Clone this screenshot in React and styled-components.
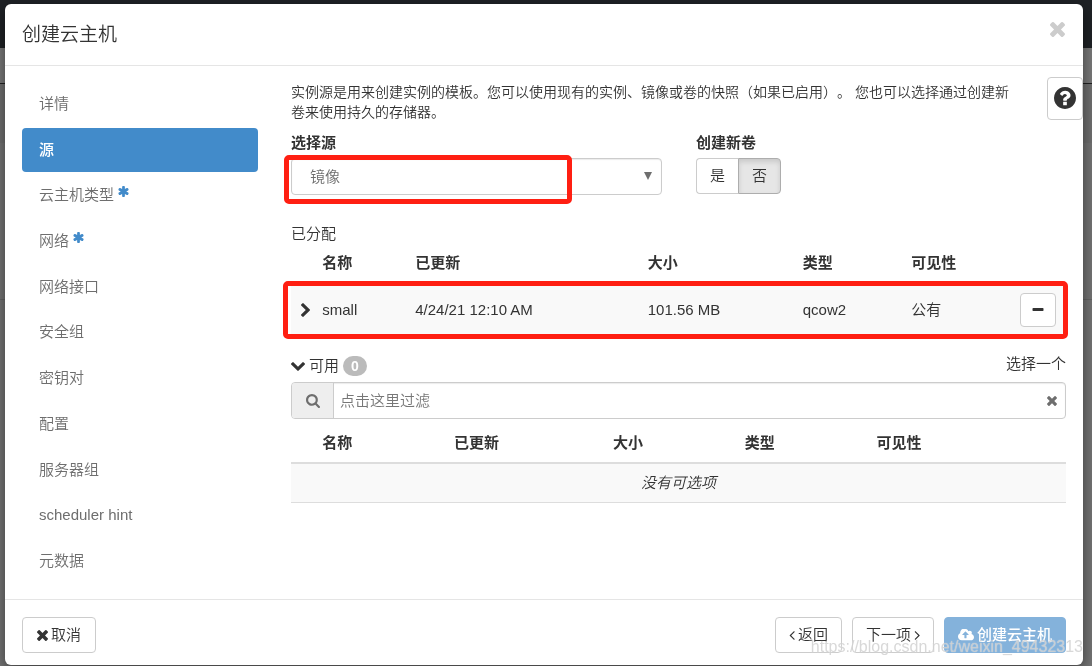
import React from 'react'
import styled, { createGlobalStyle, css } from 'styled-components'

const GlobalStyle = createGlobalStyle`
  * {
    box-sizing: border-box;
  }

  body {
    margin: 0;
    overflow: hidden;
    background: #757575;
    color: #333;
    font-family: "Liberation Sans", "Noto Sans CJK SC", sans-serif;
    font-size: 15px;
    font-weight: 350;
    line-height: 20px;
  }

  button, input, select {
    font: inherit;
    color: inherit;
  }
`

const Backdrop = styled.div`
  min-height: 100vh;
`

const TopBar = styled.div`
  height: 48px;
  background: #1f2226;
`

const Strip = styled.div`
  height: ${props => props.$height}px;
  background: ${props => props.$shade};
  border-bottom: 1px solid ${props => props.$line};
`

const Overlay = styled.div`
  position: fixed;
  inset: 0;
  padding: 4px 9px 0 5px;
`

const Modal = styled.div`
  position: relative;
  background: #fff;
  border-radius: 6px;
  box-shadow: 0 5px 15px rgba(0, 0, 0, 0.5);
`

const Header = styled.header`
  display: flex;
  justify-content: space-between;
  align-items: flex-start;
  height: 62px;
  padding: 18px 18px 0 17px;
  border-bottom: 1px solid #e5e5e5;
`

const Title = styled.h1`
  margin: 0;
  font-size: 19px;
  line-height: 26px;
  font-weight: 350;
`

const IconButton = styled.button`
  display: flex;
  padding: 0;
  border: none;
  background: none;
  color: ${props => props.$color};
`

const Body = styled.div`
  display: grid;
  grid-template-columns: 236px minmax(0, 1fr);
  gap: 33px;
  padding: 16px 17px;
  border-bottom: 1px solid #e5e5e5;
`

const Nav = styled.nav`
  display: grid;
  align-content: space-between;
  min-height: 501px;
`

const NavLink = styled.a`
  display: flex;
  align-items: center;
  gap: 4px;
  height: 44px;
  padding: 0 17px;
  border-radius: 4px;
  color: #6e6e6e;
  text-decoration: none;

  svg {
    color: #428bca;
    margin-bottom: 8px;
  }

  ${props => props.$active && css`
    background: #428bca;
    color: #fff;
    font-weight: 500;
  `}
`

const Content = styled.section`
  min-width: 0;
`

const Intro = styled.p`
  margin: 0 0 11px;
  padding-right: 52px;
  font-size: 14px;
  text-spacing-trim: space-all;
`

const Fields = styled.div`
  display: grid;
  grid-template-columns: 371px 1fr;
  gap: 34px;
`

const Label = styled.label`
  display: block;
  margin-bottom: 5px;
  font-weight: 700;
`

const SelectWrap = styled.div`
  position: relative;
`

const Select = styled.select`
  display: block;
  width: 100%;
  height: 37px;
  padding: 0 18px;
  border: 1px solid #ccc;
  border-radius: 4px;
  background: #fff;
  color: #6e6e6e;
  appearance: none;
  box-shadow: inset 0 1px 1px rgba(0, 0, 0, 0.08);
`

const Caret = styled.span`
  position: absolute;
  top: 14px;
  right: 10px;
  border: 4px solid transparent;
  border-top: 8px solid #6e6e6e;
  border-bottom: none;
  pointer-events: none;
`

const Marker = styled.div`
  position: absolute;
  inset: ${props => props.$inset};
  border: 5px solid #ff1f12;
  border-radius: 5px;
  pointer-events: none;
`

const Toggle = styled.div`
  display: flex;
`

const Button = styled.button`
  display: inline-flex;
  align-items: center;
  justify-content: center;
  gap: 3px;
  height: 36px;
  padding: 0 13px;
  border: 1px solid #ccc;
  border-radius: 4px;
  background: #fff;
  white-space: nowrap;

  ${props => props.$primary && css`
    background: #84b2db;
    border-color: #84b2db;
    color: #fff;
    font-weight: 500;
  `}
`

const ToggleButton = styled(Button)`
  &:first-child {
    border-right: none;
    border-radius: 4px 0 0 4px;
  }

  &:last-child {
    border-radius: 0 4px 4px 0;
    border-color: #adadad;
    background: #e6e6e6;
    box-shadow: inset 0 3px 5px rgba(0, 0, 0, 0.125);
  }
`

const Allocated = styled.div`
  position: relative;
  margin-top: 29px;
`

const Table = styled.table`
  width: 100%;
  table-layout: fixed;
  border-collapse: collapse;

  th, td {
    padding: 0 8px;
    text-align: left;
    white-space: nowrap;
  }
`

const AllocatedTable = styled(Table)`
  th {
    height: 38px;
  }

  td {
    height: 55px;
    background: #f9f9f9;
  }

  td:first-child {
    padding: 0 0 0 10px;
  }

  td:last-child {
    padding: 0 10px 0 0;
    text-align: right;
  }

  td:last-child button {
    width: 36px;
    height: 34px;
    padding: 0;
  }
`

const AvailableHead = styled.div`
  display: flex;
  justify-content: space-between;
  margin: 17px 0 6px;
`

const AvailableTitle = styled.div`
  display: flex;
  align-items: center;
  gap: 4px;
  padding-top: 2px;
`

const Badge = styled.span`
  padding: 0 8px;
  border-radius: 10px;
  background: #bbb;
  color: #fff;
  font-size: 14px;
  font-weight: 700;
`

const Search = styled.div`
  display: flex;
  align-items: center;
  height: 37px;
  padding-right: 8px;
  border: 1px solid #ccc;
  border-radius: 4px;
  overflow: hidden;
  box-shadow: inset 0 1px 1px rgba(0, 0, 0, 0.08);
`

const SearchIcon = styled.label`
  display: grid;
  place-items: center;
  flex: none;
  width: 42px;
  height: 100%;
  border-right: 1px solid #ccc;
  background: #eee;
  color: #6e6e6e;
`

const SearchInput = styled.input`
  flex: 1;
  min-width: 0;
  padding: 0 6px;
  border: none;
  outline: none;
  background: transparent;

  &::placeholder {
    color: #777;
    opacity: 1;
  }
`

const AvailableTable = styled(Table)`
  th {
    height: 44px;
    padding-top: 4px;
    border-bottom: 2px solid #ddd;
  }

  td {
    height: 39px;
    border-bottom: 1px solid #ddd;
    background: #f9f9f9;
    text-align: center;
    font-style: italic;
  }
`

const HelpButton = styled.button`
  position: absolute;
  top: 73px;
  right: 0;
  display: grid;
  place-items: center;
  width: 36px;
  height: 43px;
  padding: 0 0 2px;
  border: 1px solid #ccc;
  border-radius: 4px;
  background: #fff;
`

const Footer = styled.footer`
  display: flex;
  gap: 10px;
  padding: 17px 17px 12px;
`

const CancelButton = styled(Button)`
  margin-right: auto;
  padding: 0 14px;
`

const Watermark = styled.span`
  position: absolute;
  right: 0;
  bottom: 8px;
  color: rgba(190, 190, 190, 0.6);
  font-size: 16px;
  text-shadow: 0 0 1px rgba(255, 255, 255, 0.8);
  pointer-events: none;
`

const Svg = styled.svg`
  display: block;
  flex: none;
  fill: currentColor;
`

const icons = {
  times: {
    box: '302 366 1188 1188',
    d: 'M1490 1322q0 40-28 68l-136 136q-28 28-68 28t-68-28l-294-294-294 294q-28 28-68 28t-68-28l-136-136q-28-28-28-68t28-68l294-294-294-294q-28-28-28-68t28-68l136-136q28-28 68-28t68 28l294 294 294-294q28-28 68-28t68 28l136 136q28 28 28 68t-28 68l-294 294 294 294q28 28 28 68z',
  },
  chevronRight: {
    box: '346 26 1036 1612',
    d: 'M1363 877l-742 742q-19 19-45 19t-45-19l-166-166q-19-19-19-45t19-45l531-531-531-531q-19-19-19-45t19-45l166-166q19-19 45-19t45 19l742 742q19 19 19 45t-19 45z',
  },
  chevronDown: {
    box: '90 532 1612 1036',
    d: 'M1683 808l-742 741q-19 19-45 19t-45-19l-742-741q-19-19-19-45.500t19-45.500l166-165q19-19 45-19t45 19l531 531 531-531q19-19 45-19t45 19l166 165q19 19 19 45.500t-19 45.500z',
  },
  minus: {
    box: '192 640 1408 384',
    d: 'M1600 736v192q0 40-28 68t-68 28h-1216q-40 0-68-28t-28-68v-192q0-40 28-68t68-28h1216q40 0 68 28t28 68z',
  },
  search: {
    box: '64 128 1664 1664',
    d: 'M1216 832q0-185-131.500-316.500t-316.500-131.500-316.500 131.500-131.500 316.500 131.500 316.500 316.500 131.500 316.500-131.500 131.500-316.500zm512 832q0 52-38 90t-90 38q-54 0-90-38l-343-342q-179 124-399 124-143 0-273.500-55.500t-225-150-150-225-55.500-273.500 55.500-273.500 150-225 225-150 273.500-55.500 273.500 55.500 225 150 150 225 55.500 273.500q0 220-124 399l343 343q37 37 37 90z',
  },
  asterisk: {
    box: '128 128 1536 1536',
    d: 'M1546 1050q46 26 59.500 77.500t-12.500 97.500l-64 110q-26 46-77.500 59.500t-97.500-12.500l-266-153v307q0 52-38 90t-90 38h-128q-52 0-90-38t-38-90v-307l-266 153q-46 26-97.500 12.500t-77.500-59.500l-64-110q-26-46-12.500-97.500t59.500-77.500l266-154-266-154q-46-26-59.500-77.500t12.500-97.500l64-110q26-46 77.500-59.500t97.500 12.500l266 153v-307q0-52 38-90t90-38h128q52 0 90 38t38 90v307l266-153q46-26 97.500-12.500t77.500 59.500l64 110q26 46 12.500 97.500t-59.500 77.500l-266 154z',
  },
  question: {
    box: '128 128 1536 1536',
    d: 'M1024 1376v-192q0-14-9-23t-23-9h-192q-14 0-23 9t-9 23v192q0 14 9 23t23 9h192q14 0 23-9t9-23zm256-672q0-88-55.500-163t-138.500-116-170-41q-243 0-371 213-15 24 8 42l132 100q7 6 19 6 16 0 25-12 53-68 86-92 34-24 86-24 48 0 85.500 26t37.500 59q0 38-20 61t-68 45q-63 28-115.500 86.500t-52.500 125.500v36q0 14 9 23t23 9h192q14 0 23-9t9-23q0-19 21.500-49.500t54.500-49.500q32-18 49-28.500t46-35 44.500-48 28-60.500 12.500-81zm384 192q0 209-103 385.500t-279.500 279.500-385.500 103-385.500-103-279.500-279.500-103-385.500 103-385.500 279.500-279.500 385.500-103 385.500 103 279.500 279.500 103 385.500z',
  },
  angleLeft: {
    box: '577 448 626 1024',
    d: 'M1203 544q0 13-10 23l-393 393 393 393q10 10 10 23t-10 23l-50 50q-10 10-23 10t-23-10l-466-466q-10-10-10-23t10-23l466-466q10-10 23-10t23 10l50 50q10 10 10 23z',
  },
  angleRight: {
    box: '545 448 626 1024',
    d: 'M1171 960q0 13-10 23l-466 466q-10 10-23 10t-23-10l-50-50q-10-10-10-23t10-23l393-393-393-393q-10-10-10-23t10-23l50-50q10-10 23-10t23 10l466 466q10 10 10 23z',
  },
  cloudUpload: {
    box: '-64 256 1920 1280',
    d: 'M1216 864q0-14-9-23l-352-352q-9-9-23-9t-23 9l-351 351q-10 12-10 24 0 14 9 23t23 9h224v352q0 13 9.500 22.500t22.500 9.500h192q13 0 22.500-9.500t9.500-22.500v-352h224q13 0 22.500-9.500t9.500-22.500zm640 288q0 159-112.500 271.500t-271.500 112.500h-1088q-185 0-316.500-131.500t-131.500-316.500q0-130 70-240t188-165q-2-30-2-43 0-212 150-362t362-150q156 0 285.500 87t188.500 231q71-62 166-62 106 0 181 75t75 181q0 76-41 138 130 31 213.500 135.500t83.500 238.500z',
  },
}

const Icon = ({ name, width, height = width }) => (
  <Svg viewBox={icons[name].box} width={width} height={height} aria-hidden="true">
    <path d={icons[name].d} />
  </Svg>
)

const steps = [
  { name: '详情' },
  { name: '源', active: true },
  { name: '云主机类型', required: true },
  { name: '网络', required: true },
  { name: '网络接口' },
  { name: '安全组' },
  { name: '密钥对' },
  { name: '配置' },
  { name: '服务器组' },
  { name: 'scheduler hint' },
  { name: '元数据' },
]

const columns = ['名称', '已更新', '大小', '类型', '可见性']

const Col = styled.col`
  width: ${props => props.$width}%;
`

const App = () => (
  <>
    <GlobalStyle />
    <Backdrop>
      <TopBar />
      <Strip $height={36} $shade="#7a7a7a" $line="#222" />
      <Strip $height={60} $shade="#707070" $line="#757575" />
      <Strip $height={156} $shade="#757575" $line="#666" />
    </Backdrop>
    <Overlay>
      <Modal role="dialog" aria-labelledby="title">
        <Header>
          <Title id="title">创建云主机</Title>
          <IconButton aria-label="关闭" $color="#ccc"><Icon name="times" width={15} /></IconButton>
        </Header>
        <Body>
          <Nav>
            {steps.map(step => (
              <NavLink key={step.name} href="#" $active={step.active}>
                {step.name}
                {step.required && <Icon name="asterisk" width={11} />}
              </NavLink>
            ))}
          </Nav>
          <Content>
            <Intro>
              实例源是用来创建实例的模板。您可以使用现有的实例、镜像或卷的快照（如果已启用）。 您也可以选择通过创建新卷来使用持久的存储器。
            </Intro>
            <Fields>
              <div>
                <Label htmlFor="source">选择源</Label>
                <SelectWrap>
                  <Select id="source" defaultValue="image">
                    <option value="image">镜像</option>
                  </Select>
                  <Caret />
                  <Marker $inset="-3px 90px -9px -7px" />
                </SelectWrap>
              </div>
              <div>
                <Label as="div" id="volume">创建新卷</Label>
                <Toggle role="group" aria-labelledby="volume">
                  <ToggleButton>是</ToggleButton>
                  <ToggleButton aria-pressed="true">否</ToggleButton>
                </Toggle>
              </div>
            </Fields>
            <Allocated>
              <div>已分配</div>
              <AllocatedTable>
                <colgroup>
                  {[3, 12, 30, 20, 14, 13, 8].map((width, i) => <Col key={i} $width={width} />)}
                </colgroup>
                <thead>
                  <tr>
                    <th />
                    {columns.map(name => <th key={name}>{name}</th>)}
                    <th />
                  </tr>
                </thead>
                <tbody>
                  <tr>
                    <td>
                      <IconButton aria-label="展开">
                        <Icon name="chevronRight" width={9} height={14} />
                      </IconButton>
                    </td>
                    <td>small</td>
                    <td>4/24/21 12:10 AM</td>
                    <td>101.56 MB</td>
                    <td>qcow2</td>
                    <td>公有</td>
                    <td>
                      <Button aria-label="移除"><Icon name="minus" width={12} height={3} /></Button>
                    </td>
                  </tr>
                </tbody>
              </AllocatedTable>
              <Marker $inset="57px -2px -2px -8px" />
            </Allocated>
            <AvailableHead>
              <AvailableTitle>
                <Icon name="chevronDown" width={14} height={9} />
                可用
                <Badge>0</Badge>
              </AvailableTitle>
              <span>选择一个</span>
            </AvailableHead>
            <Search>
              <SearchIcon htmlFor="filter" aria-label="过滤">
                <Icon name="search" width={14} />
              </SearchIcon>
              <SearchInput id="filter" placeholder="点击这里过滤" />
              <IconButton aria-label="清除" $color="#6e6e6e"><Icon name="times" width={10} /></IconButton>
            </Search>
            <AvailableTable>
              <colgroup>
                {[6, 34, 41, 34, 34, 51].map((width, i) => <Col key={i} $width={width / 2} />)}
              </colgroup>
              <thead>
                <tr>
                  <th />
                  {columns.map(name => <th key={name}>{name}</th>)}
                </tr>
              </thead>
              <tbody>
                <tr>
                  <td colSpan="6">没有可选项</td>
                </tr>
              </tbody>
            </AvailableTable>
          </Content>
        </Body>
        <Footer>
          <CancelButton><Icon name="times" width={11} />取消</CancelButton>
          <Button><Icon name="angleLeft" width={6} height={9} />返回</Button>
          <Button>下一项<Icon name="angleRight" width={6} height={9} /></Button>
          <Button $primary><Icon name="cloudUpload" width={16} height={12} />创建云主机</Button>
        </Footer>
        <HelpButton aria-label="帮助"><Icon name="question" width={22} /></HelpButton>
        <Watermark>https://blog.csdn.net/weixin_49432313</Watermark>
      </Modal>
    </Overlay>
  </>
)

export default App
